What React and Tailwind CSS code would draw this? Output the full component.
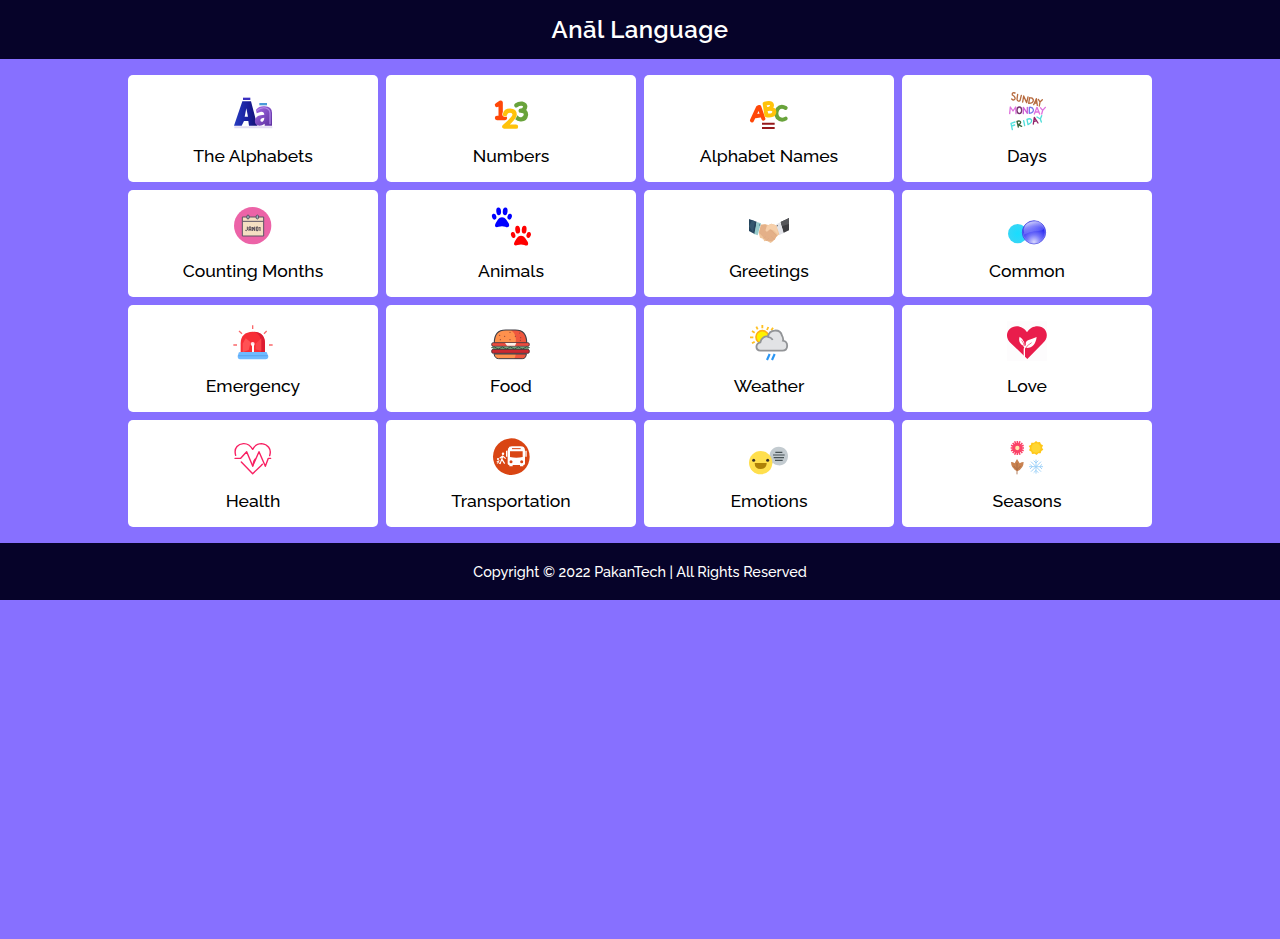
import React from "react";

function Icon({ x = 24, children }) {
  return (
    <svg className="block h-10 w-10 shrink-0" viewBox={`${x} 18 120 120`} fill="none" aria-hidden="true">
      {children}
    </svg>
  );
}

function Alphabets() {
  return (
    <Icon>
      <defs>
        <linearGradient id="aBig" x1="0" y1="0" x2="1" y2="0">
          <stop offset="0" stopColor="#263cc0" />
          <stop offset="0.6" stopColor="#1a1f9c" />
          <stop offset="1" stopColor="#131070" />
        </linearGradient>
        <linearGradient id="aSmall" x1="0" y1="0" x2="1" y2="1">
          <stop offset="0" stopColor="#a56be6" />
          <stop offset="1" stopColor="#5b2f9e" />
        </linearGradient>
      </defs>
      <path d="M28 124H142V130H28Z" fill="#e3ddf1" />
      <path d="M54 38H76V45H54Z" fill="#3b2fc0" />
      <path fillRule="evenodd" d="M52 49H78L97 122H72L70 108H57L50 122H27Z M64 70L59 95H69Z" fill="url(#aBig)" />
      <path d="M103 54H126V61H103Z" fill="#4a9ad8" />
      <path fillRule="evenodd" d="M93 74Q103 62 119 64Q141 65 141 83V122H119V116Q108 125 97 121Q88 117 90 105Q93 93 107 91L118 89Q117 79 108 80L95 85Z M118 98Q107 98 106 106Q107 112 113 110Q118 108 118 98Z" fill="url(#aSmall)" />
      <path d="M96 77Q108 66 122 69Q135 72 135 85V118" stroke="#b38bea" strokeWidth="3.5" />
    </Icon>
  );
}

function Numbers() {
  return (
    <Icon>
      <g strokeLinecap="round" strokeLinejoin="round" strokeWidth="13">
        <path d="M100 61Q108 55 117 56Q129 59 126 68Q123 77 113 77Q129 77 129 89Q127 103 115 103Q106 104 101 98" stroke="#69a33b" />
        <path d="M42 60L53 53V99M42 99H66" stroke="#ff4708" />
        <path d="M66 88Q68 77 81 77Q95 77 95 89Q94 98 64 125H99" stroke="#fff" strokeWidth="16" />
        <path d="M66 88Q68 77 81 77Q95 77 95 89Q94 98 64 125H99" stroke="#ffc20a" />
      </g>
    </Icon>
  );
}

function AlphabetNames() {
  return (
    <Icon>
      <g strokeLinecap="round" strokeLinejoin="round" strokeWidth="12">
        <path d="M134 69Q120 60 110 72Q102 85 110 98Q121 109 134 101" stroke="#69a33b" />
        <path d="M33 106L51 67L55 66L67 101M43 94L62 91" stroke="#ff4708" />
        <path d="M71 56L76 90M71 56Q93 50 93 61Q93 72 75 73Q100 68 100 81Q99 94 76 91" stroke="#ffc20a" />
      </g>
      <path d="M63 116H101M63 129H101" stroke="#96191b" strokeWidth="6" />
    </Icon>
  );
}

function Days() {
  return (
    <Icon>
      <g strokeLinecap="round" strokeLinejoin="round" strokeWidth="4">
        <g stroke="#b76b3f">
          <path d="M48 24Q38 21 40 30Q50 35 48 42Q44 48 38 42" />
          <path d="M56 28L54 43Q56 51 63 47L67 31" />
          <path d="M71 51L74 33L83 53L87 36" />
          <path d="M92 38L89 55Q104 55 103 44Q101 38 92 38" />
          <path d="M104 59L112 41L115 61M107 54H114" />
          <path d="M118 43L123 51L130 44M123 51L121 63" />
        </g>
        <path d="M32 86L34 66L42 78L50 66L51 86" stroke="#de72dc" />
        <ellipse cx="61" cy="76" rx="7" ry="10" stroke="#76356d" />
        <path d="M73 86V67L85 85V67" stroke="#cf65d7" />
        <path d="M91 67V85Q105 83 103 73Q101 66 91 67" stroke="#7778eb" />
        <path d="M106 87L114 67L122 87M109 81H120M124 68L131 76L139 67M131 76L128 87" stroke="#df72df" />
        <path d="M40 134L36 115L48 111M38 123L47 120" stroke="#54e3df" />
        <path d="M58 126L54 109Q65 106 65 113Q64 118 57 119L68 124" stroke="#37643b" />
        <path d="M74 107L77 122M84 103L87 119Q101 112 97 104Q93 99 84 103" stroke="#4fded9" />
        <path d="M103 117L106 97L117 114M104 110L113 107" stroke="#932269" />
        <path d="M114 96L124 102L128 92M124 102L127 111" stroke="#4fded9" />
      </g>
    </Icon>
  );
}

function Months() {
  return (
    <Icon>
      <circle cx="83" cy="77" r="56" fill="#ec63a7" />
      <path d="M52 51H116V108H52Z" fill="#f5dfc2" stroke="#5c5465" strokeWidth="3" />
      <path d="M53 64H115" stroke="#5c5465" strokeWidth="3" />
      <ellipse cx="69" cy="51" rx="4" ry="6" fill="#99b0c0" stroke="#5c5465" strokeWidth="3" />
      <ellipse cx="97" cy="51" rx="4" ry="6" fill="#99b0c0" stroke="#5c5465" strokeWidth="3" />
      <path d="M67 80V90Q65 93 61 91M72 93V81H78V93M72 88H78M83 93V81L89 92V80M94 81H99V92H94ZM103 83L105 81V93" stroke="#48404f" strokeWidth="2.8" />
    </Icon>
  );
}

function Paw({ color, x, y }) {
  return (
    <g fill={color} transform={`translate(${x} ${y})`}>
      <ellipse cx="6.5" cy="27" rx="6.5" ry="9" transform="rotate(-16 6.5 27)" />
      <ellipse cx="20" cy="11" rx="7.2" ry="11.5" transform="rotate(-5 20 11)" />
      <ellipse cx="39.5" cy="11" rx="7.2" ry="11.5" transform="rotate(5 39.5 11)" />
      <ellipse cx="53" cy="27" rx="6.5" ry="9" transform="rotate(16 53 27)" />
      <path d="M30 29C40 29 45 39 50 47C55 59 46 61 40 57Q30 54 20 57C11 61 6 56 11 47C16 39 20 29 30 29Z" />
    </g>
  );
}

function Animals() {
  return (
    <Icon x={798}>
      <Paw color="#0000ff" x={801} y={23} />
      <Paw color="#ff0000" x={858} y={78} />
    </Icon>
  );
}

function Greetings() {
  return (
    <Icon>
      <path d="M24 57L47 65L42 103L24 93Z" fill="#25445d" />
      <path d="M33 61L42 64L36 97L24 79Z" fill="#34576f" />
      <path d="M47 66L60 70L50 106L40 102Z" fill="#96cacb" />
      <path d="M144 54L119 66L127 99L144 91Z" fill="#3d3d40" />
      <path d="M137 58L119 66L122 79L144 72V54Z" fill="#56575a" />
      <path d="M118 67L106 73L114 106L128 99Z" fill="#e2e3e8" />
      <path d="M60 74L72 72L82 75L91 71L106 76L115 103L105 112L96 124L89 129L77 122L70 124L66 116L57 113L53 98Z" fill="#efc59b" />
      <path d="M60 74L74 74L91 88L108 106L102 118L93 124L76 122L54 98Z" fill="#e4b088" />
      <path d="M77 79L91 71L106 76L112 104L99 91L87 88L78 95Q71 93 75 86Z" fill="#f6cfaa" />
      <path d="M87 89L108 107M65 117L75 109M75 123L84 114M99 117L90 109" stroke="#d9a47d" strokeWidth="1" />
      <circle cx="56" cy="75" r="2" fill="#3d7086" />
      <circle cx="109" cy="77" r="2" fill="#646368" />
    </Icon>
  );
}

function Common() {
  return (
    <Icon x={798}>
      <defs>
        <radialGradient id="orb" cx="0.5" cy="0.92" r="0.9">
          <stop offset="0" stopColor="#dadafd" />
          <stop offset="0.35" stopColor="#7777fa" />
          <stop offset="0.75" stopColor="#2525f1" />
          <stop offset="1" stopColor="#4242e5" />
        </radialGradient>
        <linearGradient id="orbShine" x1="0" y1="0" x2="0.5" y2="1">
          <stop offset="0" stopColor="#fff" stopOpacity="0.95" />
          <stop offset="1" stopColor="#6868ff" stopOpacity="0.35" />
        </linearGradient>
        <radialGradient id="cyanOrb">
          <stop offset="0" stopColor="#19ddff" />
          <stop offset="1" stopColor="#36d6f6" />
        </radialGradient>
      </defs>
      <circle cx="830" cy="101" r="29" fill="url(#cyanOrb)" />
      <circle cx="879" cy="97" r="35" fill="url(#orb)" stroke="#3c3ce0" strokeWidth="2" />
      <path d="M849 99Q845 74 866 67Q898 56 910 84Q907 94 881 94Q864 96 849 104Z" fill="url(#orbShine)" />
      <circle cx="879" cy="97" r="33" stroke="#aaaafa" strokeWidth="1" />
    </Icon>
  );
}

function Emergency() {
  return (
    <Icon>
      <path d="M47 113V86Q47 51 83 50Q120 51 120 86V113Z" fill="#f72d36" />
      <path d="M87 50Q120 52 120 86V113H108V83Q108 57 87 50Z" fill="#dc1c32" />
      <path d="M62 70L77 82L71 105L53 112V86Z" fill="#ff5154" />
      <path d="M92 86L109 70V108L92 103Z" fill="#fa444b" />
      <circle cx="83" cy="87" r="6" fill="#ffe3e8" />
      <path d="M81 88H87V113H81Z" fill="#fff" />
      <path d="M45 111H123Q127 111 127 117L130 123Q130 133 122 133H45Q38 133 38 123L40 117Q40 111 45 111Z" fill="#70baff" />
      <path d="M40 122H128" stroke="#5da9f2" strokeWidth="4" />
      <path d="M83 31V42M42 48L51 56M125 48L117 56M25 90H36M132 90H143" stroke="#fa686b" strokeWidth="4" />
    </Icon>
  );
}

function Food() {
  return (
    <Icon x={798}>
      <path d="M808 83Q808 45 842 45H871Q905 45 905 83Z" fill="#ff914d" />
      <path d="M858 45H872Q905 47 905 83H872Q876 59 858 45Z" fill="#ef573e" />
      <path d="M808 83Q808 45 842 45H871Q905 45 905 83" stroke="#3f3d45" strokeWidth="3.4" />
      <rect x="800" y="83" width="113" height="11" rx="5" fill="#ed4c3f" stroke="#4c353c" strokeWidth="2.8" />
      <path d="M840 84H874L870 92H846Z" fill="#fff1e8" />
      <path d="M803 95H911V104H803Z" fill="#72a57c" />
      <path d="M799 98Q808 92 814 99T826 99T838 99T850 99T862 99T874 99T886 99T898 99T914 98" stroke="#365443" strokeWidth="3" />
      <rect x="800" y="103" width="113" height="12" rx="5" fill="#cb2830" stroke="#4b3036" strokeWidth="2.8" />
      <path d="M807 117H904Q903 131 892 131H821Q810 131 807 117Z" fill="#ff914d" />
      <path d="M872 117H904Q903 131 892 131H867Q871 129 872 117Z" fill="#ef573e" />
      <path d="M807 117H904Q903 131 892 131H821Q810 131 807 117Z" stroke="#3f3d45" strokeWidth="3" />
      <g fill="#8b4439">
        <circle cx="824" cy="61" r="1.8" /><circle cx="839" cy="64" r="1.8" /><circle cx="855" cy="52" r="1.8" />
        <circle cx="871" cy="64" r="1.8" /><circle cx="884" cy="54" r="1.8" /><circle cx="887" cy="68" r="1.8" />
        <circle cx="826" cy="74" r="1.8" /><circle cx="855" cy="74" r="1.8" /><circle cx="886" cy="76" r="1.8" />
      </g>
    </Icon>
  );
}

function Weather() {
  return (
    <Icon>
      <circle cx="64" cy="66" r="19" fill="#fff200" stroke="#ffb012" strokeWidth="5" />
      <path d="M64 30V40M46 35L50 43M33 48L41 53M27 67H37M33 85L41 80M82 36L78 45M96 38L91 46" stroke="#ffc022" strokeWidth="5.5" />
      <path d="M58 107C43 106 42 86 58 82C60 69 73 62 81 65C85 41 118 41 123 62C127 69 127 74 126 77C143 80 143 107 124 107Z" fill="#e2e3e5" stroke="#929497" strokeWidth="5.5" />
      <path d="M80 66Q91 67 95 75" stroke="#929497" strokeWidth="5" />
      <path d="M86 117L78 135M101 117L93 135" stroke="#2b96f3" strokeWidth="6.5" />
    </Icon>
  );
}

function Love() {
  return (
    <Icon x={798}>
      <path d="M798 19H918V138H798Z" fill="#fdfcfd" />
      <path d="M859 132L808 83C796 72 794 54 806 42C822 27 848 34 858 52C869 32 898 28 911 43C922 57 918 74 906 84Z" fill="#e91d4c" />
      <path d="M847 92C836 88 832 74 836 65Q847 72 850 83Q848 91 847 92ZM853 99C857 88 850 81 861 76Q873 72 887 66C884 88 874 101 853 99Z" fill="#fff" />
      <path d="M850 127V102Q851 91 875 80M850 96Q848 80 839 72" stroke="#fff" strokeWidth="4" />
      <path d="M854 102Q855 92 872 83M850 92Q847 82 842 76" stroke="#e91d4c" strokeWidth="1.8" />
    </Icon>
  );
}

function Health() {
  return (
    <Icon>
      <g stroke="#f82163" strokeWidth="4.2" strokeLinecap="round" strokeLinejoin="round">
        <path d="M32 76C25 51 42 42 55 41C70 40 77 48 83 58C89 46 99 41 110 41C127 43 141 56 134 77" />
        <path d="M49 96L83 131L108 107L112 103" />
        <path d="M30 85H47L65 65L83 108L102 65L121 109L130 85H137" />
        <path d="M83 108L87 93L91 87" />
      </g>
    </Icon>
  );
}

function Transportation() {
  return (
    <Icon x={798}>
      <circle cx="859" cy="80" r="55" fill="#d94513" />
      <path d="M848 101V62Q848 49 861 49H887Q900 49 900 62V101Q900 105 895 105V109H885V105H863V109H853V105Q848 105 848 101Z" fill="#fff" />
      <path d="M845 62V80M903 62V80" stroke="#fff" strokeWidth="4" />
      <path d="M861 56H887" stroke="#d94513" strokeWidth="3" />
      <path d="M855 64H893V81Q874 85 855 81Z" fill="#d94513" />
      <circle cx="858" cy="95" r="4.5" fill="#d94513" />
      <circle cx="890" cy="95" r="4.5" fill="#d94513" />
      <g stroke="#fff" strokeWidth="3.5">
        <circle cx="834" cy="71" r="2" fill="#fff" />
        <path d="M834 78L830 88L825 102M831 88L839 101M824 85L833 78L842 86" />
        <circle cx="819" cy="87" r="1.4" fill="#fff" />
        <path d="M820 92L817 101M819 93L824 102M815 95L824 92" strokeWidth="2.5" />
      </g>
    </Icon>
  );
}

function Emotions() {
  return (
    <Icon>
      <path d="M86 82C84 63 97 50 113 50C130 50 141 62 141 78C141 97 127 108 111 106Q100 104 96 99L87 106L90 95Q87 91 86 82Z" fill="#c3cbd0" />
      <path d="M103 67H124M96 75H131M98 83H129M102 91H125" stroke="#465054" strokeWidth="3.4" />
      <circle cx="59" cy="98" r="35" fill="#ffdf4d" />
      <circle cx="38" cy="91" r="4.5" fill="#39302b" />
      <circle cx="80" cy="91" r="4.5" fill="#39302b" />
      <path d="M41 99H77Q77 117 59 117Q41 117 41 99Z" fill="#ae8107" />
    </Icon>
  );
}

function Seasons() {
  return (
    <Icon x={798}>
      <g stroke="#fb4368" strokeWidth="4.7">
        <path d="M829 33V75M809 54H849M815 39L844 69M844 39L815 69M821 34L837 74M837 34L821 74M810 46L848 62M810 62L848 46" />
      </g>
      <circle cx="829" cy="54" r="15" fill="#fb4368" />
      <circle cx="829" cy="54" r="6.5" fill="#ffe8ad" />
      <path d="M885 33L890 37L897 36L900 43L906 46L903 53L907 59L901 63L899 70L892 70L887 75L881 71L873 72L871 65L864 61L867 54L863 48L870 44L871 38L879 38Z" fill="#ffc719" />
      <circle cx="885" cy="54" r="14" fill="#ffd633" />
      <path d="M828 87L836 100Q842 96 848 96Q848 115 829 124Q810 115 810 96Q816 96 821 100Z" fill="#c98250" />
      <path d="M828 99V133M828 119L818 108M828 119L839 108" stroke="#a66742" strokeWidth="2.5" />
      <g stroke="#9bd0f7" strokeWidth="2.8">
        <path d="M885 89V131M864 110H906M870 95L900 125M900 95L870 125M878 92L885 99L892 92M878 128L885 121L892 128M867 103L874 110L867 117M903 103L896 110L903 117" />
      </g>
    </Icon>
  );
}

const topics = [
  { label: "The Alphabets", Art: Alphabets },
  { label: "Numbers", Art: Numbers },
  { label: "Alphabet Names", Art: AlphabetNames },
  { label: "Days", Art: Days },
  { label: "Counting Months", Art: Months },
  { label: "Animals", Art: Animals },
  { label: "Greetings", Art: Greetings },
  { label: "Common", Art: Common },
  { label: "Emergency", Art: Emergency },
  { label: "Food", Art: Food },
  { label: "Weather", Art: Weather },
  { label: "Love", Art: Love },
  { label: "Health", Art: Health },
  { label: "Transportation", Art: Transportation },
  { label: "Emotions", Art: Emotions },
  { label: "Seasons", Art: Seasons },
];

export default function App() {
  return (
    <div className="min-h-screen bg-[#8770ff] font-[Raleway,Lato,sans-serif]">
      <header className="flex h-[59px] items-center justify-center bg-[#060329] text-white">
        <h1 className="text-2xl leading-[29px] font-semibold tracking-[0.45px]">Anāl Language</h1>
      </header>
      <main className="mx-auto grid w-[1024px] grid-cols-4 gap-2 py-4">
        {topics.map(({ label, Art }) => (
          <a key={label} href="#" className="flex h-[107px] flex-col items-center rounded-[5px] bg-white pt-4 text-black">
            <Art />
            <span className="mt-[15px] text-[17.6px] leading-5 font-medium whitespace-nowrap">{label}</span>
          </a>
        ))}
      </main>
      <footer className="flex h-[57px] items-center justify-center bg-[#060329] text-white">
        <p className="text-[14.4px] leading-[17px] font-medium">Copyright © 2022 PakanTech | All Rights Reserved</p>
      </footer>
    </div>
  );
}
